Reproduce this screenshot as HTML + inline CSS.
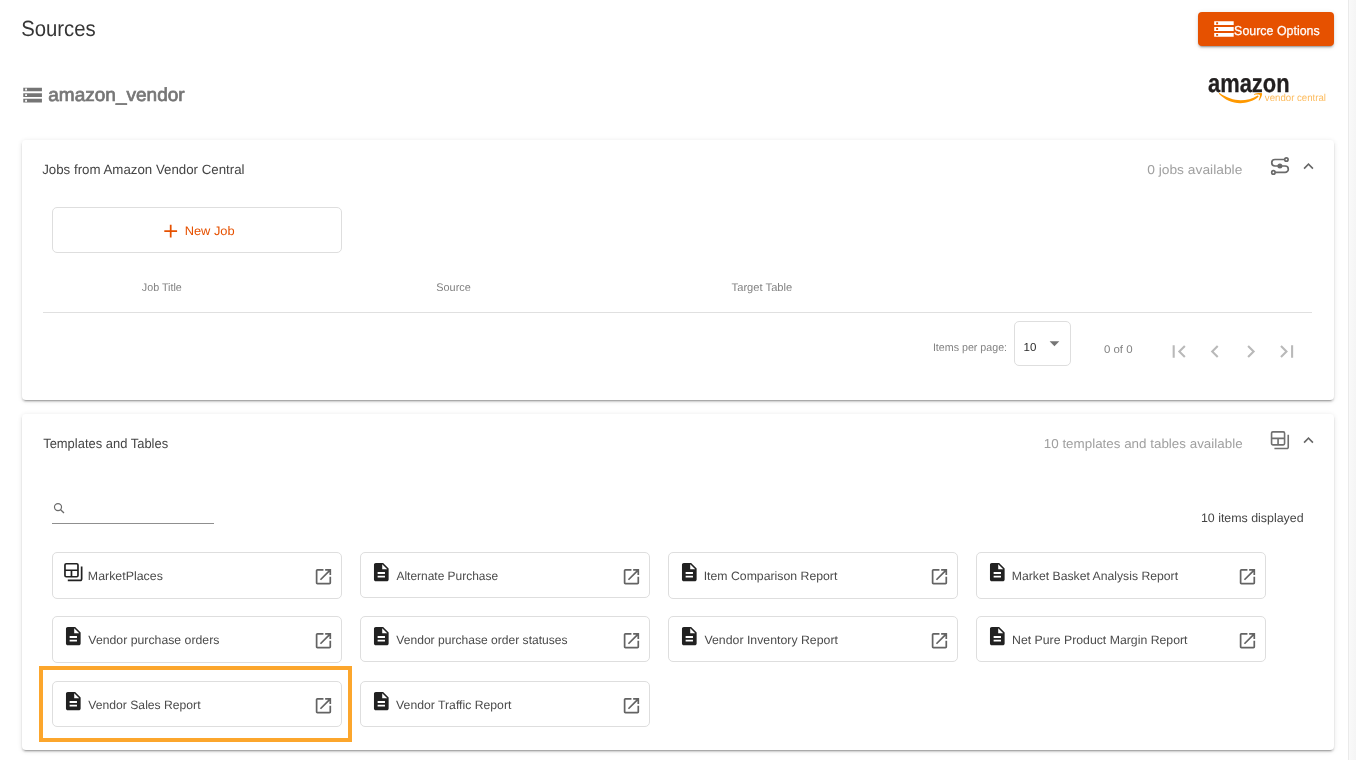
<!DOCTYPE html>
<html lang="en">
<head>
<meta charset="utf-8">
<title>Sources - amazon_vendor</title>
<style>
*{box-sizing:border-box;margin:0;padding:0}
html,body{width:1356px;height:760px;overflow:hidden;background:#fff}
body{font-family:"Liberation Sans",sans-serif;color:#212121;font-size:13px}
#root{position:absolute;left:0;top:0;width:1356px;height:760px;overflow:hidden;will-change:transform}
.abs{position:absolute;white-space:nowrap;line-height:1}
.t{position:absolute;left:0;top:0;white-space:nowrap;line-height:1;transform-origin:0 0;text-rendering:geometricPrecision}
.card{position:absolute;left:22px;width:1312px;background:#fff;border-radius:4px;
 box-shadow:0 3px 1px -2px rgba(0,0,0,.2),0 2px 2px 0 rgba(0,0,0,.14),0 1px 5px 0 rgba(0,0,0,.12)}
.tile{position:absolute;width:290px;border:1px solid #dedede;border-radius:5px;background:#fff}
svg{display:block;overflow:visible}
.g{display:block;position:static;list-style:none}
h1,h2,h3{font-weight:normal}
#strip{position:absolute;left:1348px;top:0;width:8px;height:760px;background:linear-gradient(90deg,#f9f9f9,#f5f5f5);border-left:1px solid #eaeaea}
</style>
</head>
<body>
<div id="root">

<svg width="0" height="0" style="position:absolute">
 <defs>
  <path id="doc" fill="#212121" d="M14 2H6c-1.100 0-1.990.9-1.990 2L4 20c0 1.100.89 2 1.990 2H18c1.100 0 2-.9 2-2V8l-6-6zm2 16H8v-2h8v2zm0-4H8v-2h8v2zm-3-5V3.500L18.500 9H13z"/>
  <g id="tbl" fill="none" stroke="#212121" stroke-width="1.850"><rect x="2.900" y="2.900" width="14.200" height="14.200" rx="1.400"/><path d="M3 10H17M10 10V17M21.100 6V19.600a1.500 1.500 0 0 1 -1.500 1.500H6"/></g>
  <path id="open" fill="#636363" d="M19 19H5V5h7V3H5c-1.110 0-2 .9-2 2v14c0 1.100.89 2 2 2h14c1.100 0 2-.9 2-2v-7h-2v7zM14 3v2h3.590l-9.830 9.830 1.410 1.410L19 6.410V10h2V3h-7z"/>
  <path id="less" fill="#666" d="M12 8l-6 6 1.410 1.410L12 10.830l4.590 4.580L18 14z"/>
  <path id="storage" d="M2 20h20v-4H2v4zm2-3h2v2H4v-2zM2 4v4h20V4H2zm4 3H4V5h2v2zm-4 7h20v-4H2v4zm2-3h2v2H4v-2z"/>
 </defs>
</svg>


<div id="strip"></div>

<!-- page header -->
<header class="g">
<h1 class="t" id="h1" style="font-size:22.08px;color:#363636;transform:matrix(0.9202,0,0,1,21.18,18);">Sources</h1>
<div class="abs" id="btn" style="left:1198px;top:12px;width:136px;height:34px;background:#e65100;border-radius:4px;box-shadow:0 3px 1px -2px rgba(0,0,0,.2),0 2px 2px 0 rgba(0,0,0,.14),0 1px 5px 0 rgba(0,0,0,.12)"></div>
<svg class="abs" style="left:1210px;top:15px" width="29" height="29" viewBox="0 0 29 29"><g transform="translate(2.25 2.30) scale(0.9750)"><use href="#storage" fill="#fff"/></g></svg>
<div class="t" id="btnt" style="font-size:12.96px;color:#fff;transform:matrix(0.9584,0,0,1,1234.10,25);-webkit-text-stroke:0.25px #fff;">Source Options</div>
<svg class="abs" style="left:19px;top:81px" width="28" height="28" viewBox="0 0 28 28"><g transform="translate(2.40 2.90) scale(0.9333)"><use href="#storage" fill="#757575"/></g></svg>
<h2 class="t" id="h2" style="font-size:18.72px;color:#767676;transform:matrix(1.0164,0,0,1,48.30,86);-webkit-text-stroke:0.7px #767676;">amazon_vendor</h2>

<!-- amazon vendor central logo -->
<svg class="abs" style="left:1216px;top:90px" width="50" height="16" viewBox="1216 90 50 16">
 <path d="M1219.700 93.100 C1226 97.800 1234 100.300 1240.500 100.300 C1246.500 100.300 1252.500 98.600 1257.200 95.700 C1258.200 95.100 1259.100 96.300 1258.200 97.100 C1253.500 101.100 1246.500 103.300 1240.200 103.300 C1232 103.300 1224.800 99.800 1219.100 94.100 C1218.600 93.500 1219.200 92.800 1219.700 93.100Z" fill="#ff9900"/>
 <path d="M1254.200 93.900 C1256.500 93 1259.800 92.700 1261.600 93.100 C1262.100 93.300 1262.200 93.700 1262.100 94.300 C1261.700 96.500 1260.600 99 1259.300 100.400 C1258.900 100.800 1258.500 100.600 1258.700 100.100 C1259.400 98.300 1260.300 95.900 1259.900 95.200 C1259.400 94.500 1256.500 94.500 1254.600 94.700 C1254 94.700 1253.800 94.200 1254.200 93.900Z" fill="#ff9900"/>
</svg>
<div class="t" id="amz" style="font-size:25.92px;color:#221f1f;font-weight:bold;transform:matrix(0.8449,0,0,1,1208.01,72);-webkit-text-stroke:0.3px #221f1f;">amazon</div>
<div class="t" id="vc" style="font-size:10.18px;color:#fdbb5c;transform:matrix(0.9490,0,0,1,1264.84,94);">vendor central</div>
</header>

<!-- card 1 : jobs -->
<section class="g">
<div class="card" style="top:140px;height:260px"></div>
<h3 class="t" id="c1t" style="font-size:13.44px;color:#444;transform:matrix(0.9888,0,0,1,42.18,163);">Jobs from Amazon Vendor Central</h3>
<div class="t" id="c1r" style="font-size:12.96px;color:#a0a0a0;transform:matrix(1.0652,0,0,1,1147.19,164);">0 jobs available</div>
<svg class="abs" style="left:1268px;top:155px" width="24" height="22" viewBox="1268 155 24 22" fill="none" stroke="#6a6a6a" stroke-width="1.700">
 <path d="M1284.700 159.500 H1275 a3.250 3.250 0 0 0 0 6.500 H1285.100 a3.200 3.200 0 0 1 0 6.400 H1275.100"/>
 <circle cx="1286.400" cy="159.500" r="1.700" fill="#fff"/>
 <circle cx="1273.400" cy="172.400" r="1.700" fill="#fff"/>
 <circle cx="1279.900" cy="166" r="2.500" fill="#6a6a6a" stroke="none"/>
</svg>
<svg class="abs" style="left:1296px;top:154px" width="25" height="25" viewBox="0 0 25 25"><g transform="translate(2.50 2.33) scale(0.8333)"><use href="#less"/></g></svg>

<div class="abs" style="left:52px;top:207px;width:290px;height:46px;border:1px solid #dedede;border-radius:5px"></div>
<svg class="abs" style="left:162px;top:222px" width="18" height="18" viewBox="0 0 18 18"><g transform="translate(2.30 2.70) scale(1.0000)"><path d="M6.4 0V12.8M0 6.4H12.8" stroke="#e65100" stroke-width="1.75" fill="none"/></g></svg>
<div class="t" id="nj" style="font-size:12.29px;color:#e65100;transform:matrix(1.0455,0,0,1,184.68,225);">New Job</div>
<div class="t" id="th1" style="font-size:11.04px;color:#828282;transform:matrix(0.9735,0,0,1,141.82,283);">Job Title</div>
<div class="t" id="th2" style="font-size:11.04px;color:#828282;transform:matrix(0.9870,0,0,1,436.30,283);">Source</div>
<div class="t" id="th3" style="font-size:11.04px;color:#828282;transform:matrix(1.0130,0,0,1,731.60,283);">Target Table</div>

<div class="abs" style="left:43px;top:312px;width:1269px;height:1px;background:#e0e0e0"></div>

<div class="t" id="ipp" style="font-size:11.04px;color:#828282;transform:matrix(0.9677,0,0,1,932.89,343);">Items per page:</div>
<div class="abs" style="left:1014px;top:321px;width:57px;height:45px;border:1px solid #dedede;border-radius:5px"></div>
<div class="t" id="ten" style="font-size:11.52px;color:#2a2a2a;transform:matrix(1.0001,0,0,1,1023.50,343);">10</div>
<svg class="abs" style="left:1047px;top:339px" width="15" height="15" viewBox="0 0 15 15"><g transform="translate(2.60 2.30) scale(0.9700)"><path d="M0 0H10L5 5Z" fill="#757575"/></g></svg>
<div class="t" id="of" style="font-size:11.04px;color:#828282;transform:matrix(1.0378,0,0,1,1103.89,345);">0 of 0</div>
<svg class="abs" style="left:1164px;top:336px" width="30" height="30" viewBox="0 0 30 30"><g transform="translate(2.40 2.95) scale(1.0417)"><path fill="#b9b9b9" d="M18.410 16.590L13.820 12l4.590-4.590L17 6l-6 6 6 6zM6 6h2v12H6z"/></g></svg>
<svg class="abs" style="left:1200px;top:336px" width="30" height="30" viewBox="0 0 30 30"><g transform="translate(2.40 2.95) scale(1.0417)"><path fill="#b9b9b9" d="M15.410 7.410L14 6l-6 6 6 6 1.410-1.410L10.830 12z"/></g></svg>
<svg class="abs" style="left:1236px;top:336px" width="30" height="30" viewBox="0 0 30 30"><g transform="translate(2.40 2.95) scale(1.0417)"><path fill="#b9b9b9" d="M10 6L8.590 7.410 13.170 12l-4.580 4.590L10 18l6-6z"/></g></svg>
<svg class="abs" style="left:1272px;top:336px" width="30" height="30" viewBox="0 0 30 30"><g transform="translate(2.40 2.95) scale(1.0417)"><path fill="#b9b9b9" d="M5.590 7.410L10.180 12l-4.590 4.590L7 18l6-6-6-6zM16 6h2v12h-2z"/></g></svg>

</section>

<!-- card 2 : templates -->
<section class="g">
<div class="card" style="top:414px;height:336px"></div>
<h3 class="t" id="c2t" style="font-size:13.44px;color:#444;transform:matrix(0.9633,0,0,1,43.16,437);">Templates and Tables</h3>
<div class="t" id="c2r" style="font-size:12.96px;color:#a0a0a0;transform:matrix(1.0341,0,0,1,1043.76,438);">10 templates and tables available</div>
<svg class="abs" style="left:1266px;top:427px" width="27" height="27" viewBox="0 0 27 27"><g transform="translate(2.90 2.20) scale(0.9167)"><g fill="none" stroke="#707070" stroke-width="1.75"><rect x="2.900" y="2.900" width="14.200" height="14.200" rx="1.400"/><path d="M3 10H17M10 10V17M21.100 6V19.600a1.500 1.500 0 0 1 -1.500 1.500H6"/></g></g></svg>
<svg class="abs" style="left:1296px;top:428px" width="25" height="25" viewBox="0 0 25 25"><g transform="translate(2.50 2.33) scale(0.8333)"><use href="#less"/></g></svg>

<svg class="abs" style="left:50px;top:500px" width="18" height="16" viewBox="50 500 18 16" fill="none" stroke="#6a6a6a"><circle cx="58" cy="507.100" r="3.550" stroke-width="1.150"/><path d="M60.600 509.700L64 513" stroke-width="1.300"/></svg>
<div class="abs" style="left:52px;top:523px;width:162px;height:1px;background:#8f8f8f"></div>
<div class="t" id="disp" style="font-size:12.29px;color:#444;transform:matrix(1.0092,0,0,1,1200.92,512);">10 items displayed</div>
<ul class="g">
<li class="g"><div class="tile" style="left:52px;top:552px;height:47px"></div><svg class="abs" style="left:60px;top:559px" width="27" height="27" viewBox="0 0 27 27"><g transform="translate(2.30 2.10) scale(0.9167)"><use href="#tbl"/></g></svg><span class="t" id="l00" style="font-size:12.1px;color:#4b4b4b;transform:matrix(1.0230,0,0,1,87.87,570);">MarketPlaces</span><svg class="abs" style="left:311px;top:564px" width="26" height="26" viewBox="0 0 26 26"><g transform="translate(2.20 2.50) scale(0.8542)"><use href="#open"/></g></svg></li>
<li class="g"><div class="tile" style="left:360px;top:552px;height:46px"></div><svg class="abs" style="left:368px;top:559px" width="27" height="27" viewBox="0 0 27 27"><g transform="translate(2.30 2.10) scale(0.9167)"><use href="#doc"/></g></svg><span class="t" id="l01" style="font-size:12.1px;color:#4b4b4b;transform:matrix(0.9882,0,0,1,396.45,570);">Alternate Purchase</span><svg class="abs" style="left:619px;top:564px" width="26" height="26" viewBox="0 0 26 26"><g transform="translate(2.20 2.50) scale(0.8542)"><use href="#open"/></g></svg></li>
<li class="g"><div class="tile" style="left:668px;top:552px;height:47px"></div><svg class="abs" style="left:676px;top:559px" width="27" height="27" viewBox="0 0 27 27"><g transform="translate(2.30 2.10) scale(0.9167)"><use href="#doc"/></g></svg><span class="t" id="l02" style="font-size:12.1px;color:#4b4b4b;transform:matrix(1.0147,0,0,1,703.69,570);">Item Comparison Report</span><svg class="abs" style="left:927px;top:564px" width="26" height="26" viewBox="0 0 26 26"><g transform="translate(2.20 2.50) scale(0.8542)"><use href="#open"/></g></svg></li>
<li class="g"><div class="tile" style="left:976px;top:552px;height:47px"></div><svg class="abs" style="left:984px;top:559px" width="27" height="27" viewBox="0 0 27 27"><g transform="translate(2.30 2.10) scale(0.9167)"><use href="#doc"/></g></svg><span class="t" id="l03" style="font-size:12.1px;color:#4b4b4b;transform:matrix(1.0094,0,0,1,1011.85,570);">Market Basket Analysis Report</span><svg class="abs" style="left:1235px;top:564px" width="26" height="26" viewBox="0 0 26 26"><g transform="translate(2.20 2.50) scale(0.8542)"><use href="#open"/></g></svg></li>
<li class="g"><div class="tile" style="left:52px;top:616px;height:47px"></div><svg class="abs" style="left:60px;top:623px" width="27" height="27" viewBox="0 0 27 27"><g transform="translate(2.30 2.10) scale(0.9167)"><use href="#doc"/></g></svg><span class="t" id="l10" style="font-size:12.1px;color:#4b4b4b;transform:matrix(1.0149,0,0,1,88.37,634);">Vendor purchase orders</span><svg class="abs" style="left:311px;top:628px" width="26" height="26" viewBox="0 0 26 26"><g transform="translate(2.20 2.50) scale(0.8542)"><use href="#open"/></g></svg></li>
<li class="g"><div class="tile" style="left:360px;top:616px;height:46px"></div><svg class="abs" style="left:368px;top:623px" width="27" height="27" viewBox="0 0 27 27"><g transform="translate(2.30 2.10) scale(0.9167)"><use href="#doc"/></g></svg><span class="t" id="l11" style="font-size:12.1px;color:#4b4b4b;transform:matrix(0.9991,0,0,1,396.33,634);">Vendor purchase order statuses</span><svg class="abs" style="left:619px;top:628px" width="26" height="26" viewBox="0 0 26 26"><g transform="translate(2.20 2.50) scale(0.8542)"><use href="#open"/></g></svg></li>
<li class="g"><div class="tile" style="left:668px;top:616px;height:46px"></div><svg class="abs" style="left:676px;top:623px" width="27" height="27" viewBox="0 0 27 27"><g transform="translate(2.30 2.10) scale(0.9167)"><use href="#doc"/></g></svg><span class="t" id="l12" style="font-size:12.1px;color:#4b4b4b;transform:matrix(1.0179,0,0,1,704.48,634);">Vendor Inventory Report</span><svg class="abs" style="left:927px;top:628px" width="26" height="26" viewBox="0 0 26 26"><g transform="translate(2.20 2.50) scale(0.8542)"><use href="#open"/></g></svg></li>
<li class="g"><div class="tile" style="left:976px;top:616px;height:46px"></div><svg class="abs" style="left:984px;top:623px" width="27" height="27" viewBox="0 0 27 27"><g transform="translate(2.30 2.10) scale(0.9167)"><use href="#doc"/></g></svg><span class="t" id="l13" style="font-size:12.1px;color:#4b4b4b;transform:matrix(1.0157,0,0,1,1012.06,634);">Net Pure Product Margin Report</span><svg class="abs" style="left:1235px;top:628px" width="26" height="26" viewBox="0 0 26 26"><g transform="translate(2.20 2.50) scale(0.8542)"><use href="#open"/></g></svg></li>
<li class="g"><div class="tile" style="left:52px;top:681px;height:46px"></div><svg class="abs" style="left:60px;top:688px" width="27" height="27" viewBox="0 0 27 27"><g transform="translate(2.30 2.10) scale(0.9167)"><use href="#doc"/></g></svg><span class="t" id="l20" style="font-size:12.1px;color:#4b4b4b;transform:matrix(1.0052,0,0,1,88.35,699);">Vendor Sales Report</span><svg class="abs" style="left:311px;top:693px" width="26" height="26" viewBox="0 0 26 26"><g transform="translate(2.20 2.50) scale(0.8542)"><use href="#open"/></g></svg></li>
<li class="g"><div class="tile" style="left:360px;top:681px;height:46px"></div><svg class="abs" style="left:368px;top:688px" width="27" height="27" viewBox="0 0 27 27"><g transform="translate(2.30 2.10) scale(0.9167)"><use href="#doc"/></g></svg><span class="t" id="l21" style="font-size:12.1px;color:#4b4b4b;transform:matrix(1.0104,0,0,1,396.11,699);">Vendor Traffic Report</span><svg class="abs" style="left:619px;top:693px" width="26" height="26" viewBox="0 0 26 26"><g transform="translate(2.20 2.50) scale(0.8542)"><use href="#open"/></g></svg></li>
</ul>
<div class="abs" style="left:39px;top:666px;width:313px;height:76px;border:4px solid #fca62c"></div>
</section>

</div>
</body>
</html>
